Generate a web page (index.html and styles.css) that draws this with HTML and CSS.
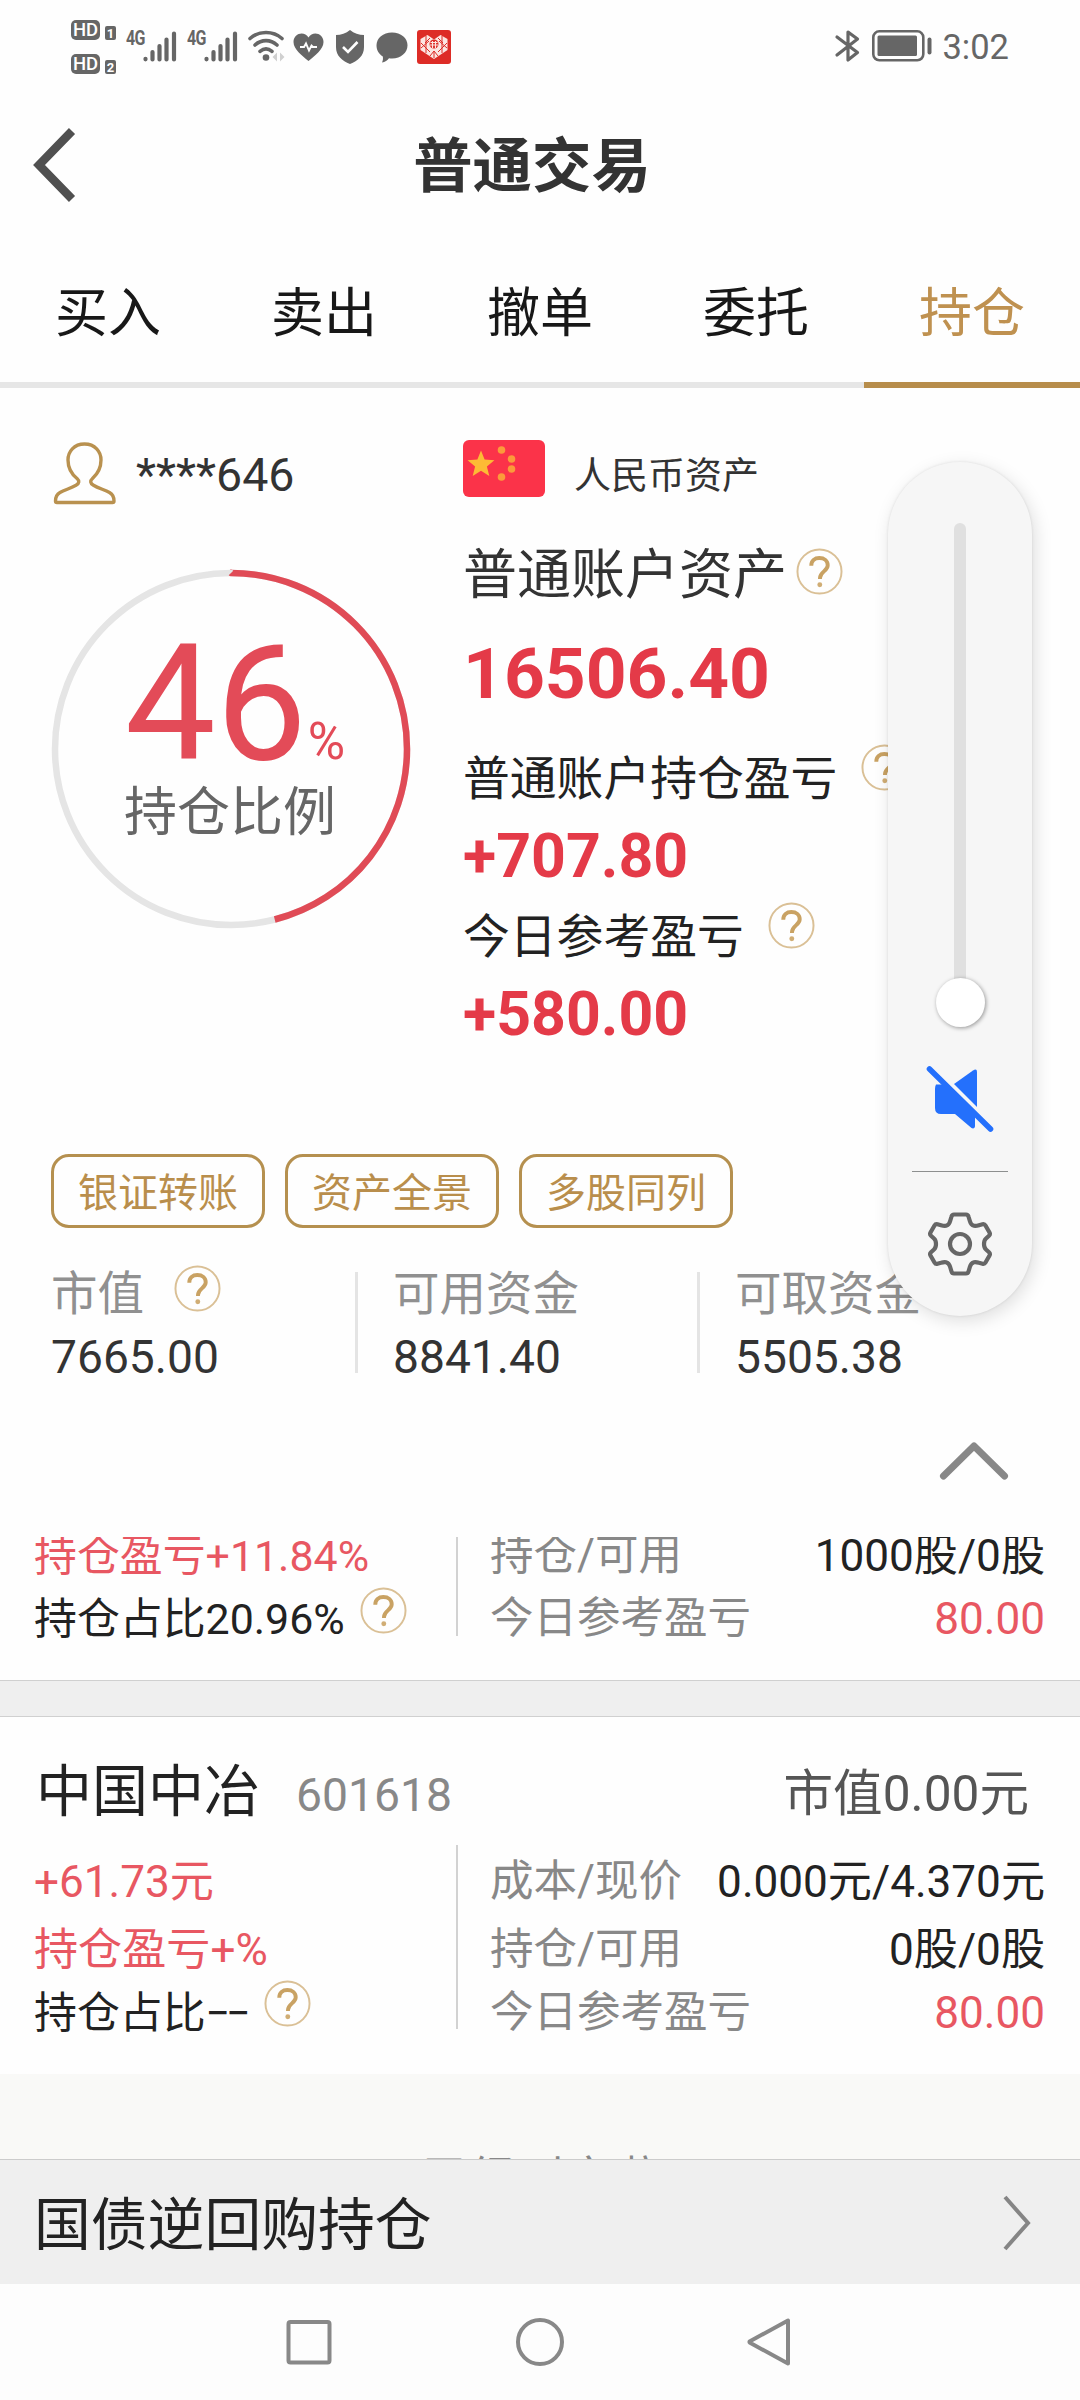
FILE: index.html
```html
<!DOCTYPE html>
<html lang="zh-CN">
<head>
    <meta charset="UTF-8">
    <meta name="viewport" content="width=device-width, initial-scale=1.0">
    <title>普通交易</title>
    <link rel="stylesheet" href="styles.css">
</head>
<body>
    <svg class="defs">
        <symbol id="help" viewBox="0 0 48 48">
            <circle cx="24" cy="24" r="22.500" fill="none" stroke="#dac096" stroke-width="2"/>
            <path d="M15.600 18c0-5 3.600-7.800 8.200-7.800 5 0 8.600 2.900 8.600 7.400 0 6-7.900 6.600-7.900 13v1" fill="none" stroke="#c9a263" stroke-width="4"/>
            <circle cx="24.300" cy="37.500" r="2.500" fill="#d0ad74"/>
        </symbol>
        <symbol id="signal" viewBox="0 0 34 31">
            <path d="M2.500 27.800v.5M9.500 21v7.500M16.500 15v13.500M23.500 8.500v20M31 2.500v26" stroke="#666" stroke-width="4.200" stroke-linecap="round"/>
        </symbol>
    </svg>

    <div class="status-bar">
        <div class="hd-group">
            <div class="hd-row"><span class="hd">HD</span><span class="sim">1</span></div>
            <div class="hd-row"><span class="hd">HD</span><span class="sim">2</span></div>
        </div>
        <span class="net">4G</span>
        <svg class="signal"><use href="#signal"/></svg>
        <span class="net net-second">4G</span>
        <svg class="signal"><use href="#signal"/></svg>
        <svg class="wifi" viewBox="0 0 38 31">
            <g fill="none" stroke="#666" stroke-width="3.600" stroke-linecap="round">
                <path d="M2 8.500c9-8 23-8 32 0M7 15c6.500-5.800 15.500-5.800 22 0M12 21.300c4-3.300 8-3.300 12 0"/>
            </g>
            <circle cx="18" cy="27.500" r="3.300" fill="#666"/>
            <path d="M29 22.500v9l-4.500-4.500zM32 22.500v9l4.500-4.500z" fill="#d0d0d0"/>
        </svg>
        <svg class="heart" viewBox="0 0 31 28">
            <path d="M15.500 28C9 22.500.5 16.500.5 9c0-9 11-11.500 15-4.500C19.500-2.500 30.500 0 30.500 9c0 7.500-8.500 13.500-15 19z" fill="#666"/>
            <path d="M7 14h4l2-3.500 3 7 2.500-5 1.500 1.500h4" fill="none" stroke="#fff" stroke-width="1.900"/>
        </svg>
        <svg class="shield" viewBox="0 0 30 34">
            <path d="M15 0c4 3.500 9 4.800 14 5v12c0 9-6 13.500-14 17C7 30.500 1 26 1 17V5c5-.2 10-1.500 14-5z" fill="#666"/>
            <path d="M8 17l5 5 9.500-10" fill="none" stroke="#fff" stroke-width="2.600"/>
        </svg>
        <svg class="bubble" viewBox="0 0 32 31">
            <path d="M16 .5c9 0 15.500 5.500 15.500 12.800S25 26.500 16 26.500c-1 0-2 0-3-.2-1.500 2.200-4 3.900-7 4.200 1-2 1.200-4 .8-6C2.700 22 .5 18 .5 13.300.5 6 7 .5 16 .5z" fill="#666"/>
        </svg>
        <svg class="app" viewBox="0 0 34 34">
            <rect width="34" height="34" rx="3" fill="#dd2c26"/>
            <path d="M17 9.500L10.500 5 3.500 9v11L17 29l13.500-9V9l-7-4z" fill="#fbe6e2"/>
            <path d="M4 13l9 9M4 18l8-7M9 6v17M13 8l-5 5M30 13l-9 9M30 18l-8-7M25 6v17M21 8l5 5M13 26l4-5 4 5M17 21v7" stroke="#dd2c26" stroke-width="1" fill="none"/>
            <circle cx="17" cy="14" r="4.500" fill="#dd2c26"/>
            <path d="M13.500 12.500h7M13 15h8M15.500 11v7M18.500 11v7" stroke="#fbe6e2" stroke-width="1.100"/>
        </svg>
        <svg class="bluetooth" viewBox="0 0 26 32">
            <path d="M2 7l20.500 15.500L13 30V2l9.500 7L2 25" fill="none" stroke="#666" stroke-width="3.200" stroke-linejoin="round" stroke-linecap="round"/>
        </svg>
        <svg class="battery" viewBox="0 0 61 32">
            <rect x="1.300" y="1.300" width="50" height="29" rx="6" fill="none" stroke="#666" stroke-width="2.600"/>
            <rect x="5.500" y="5.500" width="39.500" height="20.500" rx="1.500" fill="#666"/>
            <path d="M57.500 9.500v13" stroke="#666" stroke-width="4" stroke-linecap="round"/>
        </svg>
        <span class="clock">3:02</span>
    </div>

    <div class="header">
        <svg class="back" viewBox="0 0 44 74"><path d="M40 3L7 37l33 34" fill="none" stroke="#505050" stroke-width="8.500"/></svg>
        <h1>普通交易</h1>
    </div>

    <div class="tabs">
        <div class="tab">买入</div>
        <div class="tab">卖出</div>
        <div class="tab">撤单</div>
        <div class="tab">委托</div>
        <div class="tab active">持仓</div>
    </div>

    <div class="overview">
        <div class="account">
            <div class="user">
                <svg class="user-icon" viewBox="0 0 62 62">
                    <path d="M30.500 2C20 2 14 9.500 14 18c0 8 3.500 14 9 18.500 2.500 2.300 2.500 4.800-1 6.800-5 3-11 4.500-16 7.200-3.500 2-4.500 4-4.500 8.500 0 1.200.4 1.500 1.500 1.500h55.500c1.100 0 1.500-.3 1.500-1.500 0-4.500-1-6.500-4.500-8.500-5-2.700-11-4.200-16-7.200-3.500-2-3.500-4.500-1-6.800 5-4.500 8.500-10.500 8.500-18.500 0-8.500-6-16-16.500-16z" fill="none" stroke="#b9914f" stroke-width="3.400"/>
                </svg>
                <span>****646</span>
            </div>
            <div class="ring">
                <svg class="ring-svg" viewBox="0 0 360 360">
                    <circle cx="180" cy="180" r="176" fill="none" stroke="#e5e5e5" stroke-width="6.500"/>
                    <circle cx="180" cy="180" r="176" fill="none" stroke="#e04b56" stroke-width="6.500" pathLength="100" stroke-dasharray="46 54" transform="rotate(-90 180 180)"/>
                </svg>
                <div class="ring-value">46<small>%</small></div>
                <div class="ring-label">持仓比例</div>
            </div>
        </div>
        <div class="assets">
            <div class="currency">
                <svg class="flag" viewBox="0 0 82 57">
                    <rect width="82" height="57" rx="6" fill="#fb3349"/>
                    <path d="M18 10.500l3.600 9.100 9.800.6-7.500 6.300 2.400 9.500-8.300-5.300-8.300 5.300 2.400-9.500-7.500-6.300 9.800-.6z" fill="#fdbb35"/>
                    <g fill="#fb9a3a"><circle cx="38.500" cy="10" r="3.800"/><circle cx="48.500" cy="19" r="3.800"/><circle cx="48.500" cy="29" r="3.800"/><circle cx="38.500" cy="37" r="3.800"/></g>
                </svg>
                <span>人民币资产</span>
            </div>
            <div class="total-label">普通账户资产<svg class="help"><use href="#help"/></svg></div>
            <div class="total">16506.40</div>
            <div class="profit-label">普通账户持仓盈亏<svg class="help"><use href="#help"/></svg></div>
            <div class="profit">+707.80</div>
            <div class="profit-label today">今日参考盈亏<svg class="help"><use href="#help"/></svg></div>
            <div class="profit">+580.00</div>
        </div>
    </div>

    <div class="actions">
        <button class="action">银证转账</button>
        <button class="action">资产全景</button>
        <button class="action">多股同列</button>
    </div>

    <div class="stats">
        <div class="stat">
            <div class="stat-label">市值<svg class="help"><use href="#help"/></svg></div>
            <div class="stat-value">7665.00</div>
        </div>
        <div class="stat">
            <div class="stat-label">可用资金</div>
            <div class="stat-value">8841.40</div>
        </div>
        <div class="stat">
            <div class="stat-label">可取资金</div>
            <div class="stat-value">5505.38</div>
        </div>
    </div>

    <div class="collapse">
        <svg class="chevron-up" viewBox="0 0 68 40"><path d="M3.500 36L34 6l30.500 30" fill="none" stroke="#888" stroke-width="7" stroke-linecap="round" stroke-linejoin="round"/></svg>
    </div>

    <div class="holding holding-first">
        <div class="holding-body">
            <div class="holding-left">
                <div class="row red">持仓盈亏+11.84%</div>
                <div class="row">持仓占比20.96%<svg class="help"><use href="#help"/></svg></div>
            </div>
            <div class="holding-right">
                <div class="row"><span class="name">持仓/可用</span><span>1000股/0股</span></div>
                <div class="row"><span class="name">今日参考盈亏</span><span class="red">80.00</span></div>
            </div>
        </div>
    </div>

    <div class="holding">
        <div class="holding-title">
            <span class="stock">中国中冶</span>
            <span class="code">601618</span>
            <span class="value">市值0.00元</span>
        </div>
        <div class="holding-body">
            <div class="holding-left">
                <div class="row red">+61.73元</div>
                <div class="row red">持仓盈亏+%</div>
                <div class="row ratio">持仓占比<span class="dashes">−−</span><svg class="help"><use href="#help"/></svg></div>
            </div>
            <div class="holding-right">
                <div class="row"><span class="name">成本/现价</span><span>0.000元/4.370元</span></div>
                <div class="row"><span class="name">持仓/可用</span><span>0股/0股</span></div>
                <div class="row"><span class="name">今日参考盈亏</span><span class="red">80.00</span></div>
            </div>
        </div>
    </div>

    <div class="list-end"><p>已经到底啦</p></div>

    <div class="repo-bar">
        <span>国债逆回购持仓</span>
        <svg class="arrow-right" viewBox="0 0 30 56"><path d="M3 2l23 26L3 54" fill="none" stroke="#858585" stroke-width="4"/></svg>
    </div>

    <div class="nav-bar">
        <svg viewBox="0 0 50 50"><rect x="4.500" y="5" width="41" height="40.500" rx="2" fill="none" stroke="#888" stroke-width="4"/></svg>
        <svg viewBox="0 0 50 50"><circle cx="25" cy="25" r="22" fill="none" stroke="#888" stroke-width="4"/></svg>
        <svg viewBox="0 0 50 50"><path d="M42 3.500v43L4 25.800q-1.200-.8 0-1.600z" fill="none" stroke="#888" stroke-width="4" stroke-linejoin="round"/></svg>
    </div>

    <div class="volume">
        <div class="track"></div>
        <div class="thumb"></div>
        <svg class="mute" viewBox="0 0 68 68">
            <path d="M10 19.500h9l30 27.500v14c0 2-1.500 3-3.500 2L29 49H15q-6 0-6-6V24q0-3 1-4.500z" fill="#2470fc"/>
            <path d="M28 19L47 5.500q4-2.500 4 1.500V42z" fill="#2470fc"/>
            <path d="M3.500 4l61 60" stroke="#2470fc" stroke-width="5.600" stroke-linecap="round"/>
        </svg>
        <div class="volume-line"></div>
        <svg class="gear" viewBox="0 0 64 66">
            <path d="M26 3.500h12q2 0 2.500 2l1.500 5q1 3.500 4 4.300 2 .4 5-.6l3.500-1q2-.5 3 1.300l4 7q1 1.900-.5 3.300l-3 2.700q-2 1.800-2 5.500t2 5.500l3 2.700q1.500 1.400.5 3.300l-4 7q-1 1.800-3 1.300l-3.500-1q-3-1-5-.6-3 .8-4 4.300l-1.500 5q-.5 2-2.500 2H26q-2 0-2.500-2l-1.500-5q-1-3.500-4-4.300-2-.4-5 .6l-3.500 1q-2 .5-3-1.300l-4-7q-1-1.900.5-3.300l3-2.700q2-1.800 2-5.500T6 27.500l-3-2.700q-1.500-1.400-.5-3.300l4-7q1-1.800 3-1.300l3.500 1q3 1 5 .6 3-.8 4-4.300l1.500-5q.5-2 2.500-2z" fill="none" stroke="#666" stroke-width="4.200"/>
            <circle cx="32" cy="33" r="10" fill="none" stroke="#666" stroke-width="4.200"/>
        </svg>
    </div>
</body>
</html>
```
FILE: styles.css
```css
* {
    box-sizing: border-box;
}

body {
    margin: 0;
    width: 1080px;
    height: 2400px;
    position: relative;
    overflow: hidden;
    background-color: #fefefe;
    color: #222;
    font-family: Roboto, "Noto Sans CJK SC", sans-serif;
}

svg {
    display: block;
    flex: none;
    overflow: visible;
}

.defs {
    position: absolute;
    width: 0;
    height: 0;
}

.help {
    width: 47px;
    height: 47px;
}

.red {
    color: #e85762;
}

/* status bar */
.status-bar {
    display: flex;
    align-items: flex-start;
    height: 90px;
    padding: 0 71px;
    color: #666;
}

.hd-group {
    width: 55px;
    padding-top: 19px;
}

.hd-row {
    display: flex;
    align-items: flex-end;
    gap: 5px;
    height: 21px;
    margin-bottom: 13px;
}

.hd {
    width: 29px;
    height: 20px;
    border-radius: 5px;
    background-color: #666;
    color: #fff;
    font: 500 18.5px/21px Roboto, sans-serif;
    text-align: center;
}

.sim {
    width: 11px;
    height: 14px;
    border-radius: 2px;
    background-color: #666;
    color: #fff;
    font: bold 13px/15px Roboto, sans-serif;
    text-align: center;
}

.net {
    width: 17px;
    margin-top: 28px;
    font: bold 20px/20px Roboto, sans-serif;
    letter-spacing: -1px;
    white-space: nowrap;
    transform: scaleX(0.8);
    transform-origin: left;
}

.net-second {
    margin-left: 10px;
}

.signal {
    width: 34px;
    height: 31px;
    margin-top: 31px;
}

.wifi {
    width: 38px;
    height: 31px;
    margin: 30px 0 0 10px;
}

.heart {
    width: 31px;
    height: 28px;
    margin: 33px 0 0 7px;
}

.shield {
    width: 30px;
    height: 34px;
    margin: 30px 0 0 11px;
}

.bubble {
    width: 32px;
    height: 31px;
    margin: 32px 0 0 11px;
}

.app {
    width: 34px;
    height: 34px;
    margin: 30px 0 0 9px;
}

.bluetooth {
    width: 26px;
    height: 32px;
    margin: 30px -2px 0 auto;
}

.battery {
    width: 61px;
    height: 32px;
    margin: 30px 0 0 13px;
}

.clock {
    margin: 27px 0 0 9px;
    font-size: 34.5px;
    line-height: 40px;
}

/* header and tabs */
.header {
    display: flex;
    align-items: center;
    height: 150px;
    padding: 0 32px;
}

.back {
    width: 44px;
    height: 74px;
}

.header h1 {
    flex: 1;
    margin: 3px 60px 0 0;
    font-size: 59.4px;
    font-weight: bold;
    line-height: 64px;
    text-align: center;
    color: #333;
}

.tabs {
    display: flex;
    height: 148px;
}

.tab {
    flex: 1;
    padding-top: 43px;
    border-bottom: 6px solid #e6e6e6;
    font-size: 53px;
    line-height: 62px;
    text-align: center;
    color: #181818;
}

.tab.active {
    border-color: #b78d4b;
    color: #bf9150;
}

/* overview */
.overview {
    display: flex;
    height: 766px;
    padding: 52px 0 0 51px;
}

.account {
    width: 412px;
}

.user {
    display: flex;
    align-items: center;
    gap: 20px;
    height: 69px;
    margin-bottom: 60px;
    padding-left: 3px;
    color: #333;
    font-size: 46.5px;
}

.user-icon {
    width: 62px;
    height: 62px;
    margin-top: -3px;
}

.ring {
    display: flex;
    flex-direction: column;
    align-items: center;
    position: relative;
    width: 360px;
    height: 360px;
}

.ring-svg {
    position: absolute;
    inset: 0;
}

.ring-value {
    height: 150px;
    margin: 60px 0 0 8px;
    color: #e34b58;
    font-size: 162px;
    line-height: 150px;
    white-space: nowrap;
}

.ring-value small {
    margin-left: 1px;
    font-size: 51px;
}

.ring-label {
    margin: 2px 2px 0 0;
    color: #666;
    font-size: 53px;
    line-height: 64px;
}

.currency {
    display: flex;
    align-items: center;
    gap: 29px;
    height: 57px;
    color: #333;
    font-size: 37px;
}

.currency span {
    margin-top: 9px;
}

.flag {
    width: 82px;
    height: 57px;
}

.total-label {
    display: flex;
    gap: 9px;
    height: 60px;
    margin-top: 49px;
    color: #333;
    font-size: 54px;
    line-height: 60px;
}

.total-label .help {
    margin-top: 2px;
}

.total {
    margin-top: 32px;
    color: #e43a48;
    font-size: 71.3px;
    font-weight: bold;
    line-height: 72px;
}

.profit-label {
    display: flex;
    gap: 24px;
    height: 50px;
    margin-top: 44px;
    font-size: 46.8px;
    line-height: 50px;
}

.profit-label .help {
    margin-top: -10px;
}

.profit-label.today {
    margin-top: 25px;
}

.profit {
    margin-top: 23px;
    color: #e43a48;
    font-size: 60.8px;
    font-weight: bold;
    line-height: 60px;
}

.actions {
    display: flex;
    gap: 20px;
    padding-left: 51px;
}

.action {
    width: 214px;
    height: 74px;
    padding: 6px 0 0;
    border: 3px solid #b5904f;
    border-radius: 18px;
    background-color: transparent;
    color: #b98e4c;
    font-family: inherit;
    font-size: 40px;
    line-height: 62px;
}

.stats {
    display: flex;
    margin-top: 44px;
    padding-left: 16px;
}

.stat {
    width: 342px;
    height: 101px;
    padding-left: 35px;
    border-right: 3px solid #e4e4e4;
}

.stat:last-child {
    border-right: none;
}

.stat-label {
    display: flex;
    gap: 30px;
    height: 50px;
    margin-top: -3px;
    color: #909090;
    font-size: 46.5px;
    line-height: 50px;
}

.stat-label .help {
    margin-top: -4px;
}

.stat-value {
    margin-top: 13px;
    color: #333;
    font-size: 46.2px;
    line-height: 50px;
}

.collapse {
    display: flex;
    justify-content: flex-end;
    height: 164px;
    padding: 67px 72px 0 0;
}

.chevron-up {
    width: 68px;
    height: 40px;
}

/* holdings */
.holding {
    height: 358px;
    padding-top: 43px;
}

.holding-first {
    height: 179px;
    padding-top: 0;
    overflow: hidden;
    border-bottom: 35px solid #efefef;
    box-shadow: inset 0 -1px #d0d0d0, 0 1px #d0d0d0;
}

.holding-title {
    display: flex;
    align-items: baseline;
    height: 86px;
    padding: 0 51px 0 36px;
    line-height: 66px;
}

.stock {
    width: 260px;
    font-size: 56px;
}

.code {
    color: #888;
    font-size: 46.3px;
}

.value {
    margin-left: auto;
    color: #555;
    font-size: 49.6px;
}

.holding-body {
    display: flex;
    height: 184px;
    padding-right: 35px;
}

.holding-first .holding-body {
    height: 99px;
}

.holding-left {
    width: 458px;
    padding-left: 34px;
    border-right: 2px solid #d2d2d2;
}

.holding-right {
    flex: 1;
    padding-left: 32px;
}

.row {
    display: flex;
    justify-content: space-between;
    height: 68px;
    margin-top: 3px;
    font-size: 44.1px;
    line-height: 68px;
}

.row + .row {
    margin-top: 0;
}

.row + .row + .row {
    height: 58px;
    line-height: 58px;
}

.holding-left .row {
    justify-content: flex-start;
}

.holding-first .row {
    height: 64px;
    margin-top: -13px;
    line-height: 64px;
}

.holding-first .holding-left .row,
.holding-left .ratio {
    font-size: 42.9px;
}

.holding-first .row + .row {
    margin-top: -1px;
}

.row .help {
    margin-left: 15px;
}

.ratio .help {
    margin-top: -4px;
    margin-left: 17px;
}

.dashes {
    letter-spacing: -4px;
}

.name {
    color: #888;
    font-size: 43.5px;
}

.list-end {
    height: 85px;
    padding-top: 72px;
    overflow: hidden;
    background-color: #f9f9f7;
}

.list-end p {
    margin: 0;
    color: #888;
    font-size: 47px;
    line-height: 66px;
    text-align: center;
}

.repo-bar {
    display: flex;
    align-items: center;
    justify-content: space-between;
    height: 125px;
    padding: 0 48px 0 34px;
    border-top: 1px solid #ccc;
    background-color: #efefef;
    font-size: 56.8px;
}

.repo-bar span {
    margin-top: 8px;
    line-height: 64px;
}

.arrow-right {
    width: 30px;
    height: 56px;
    margin-top: 2px;
}

.nav-bar {
    display: flex;
    justify-content: center;
    gap: 181px;
    height: 116px;
    padding-top: 33px;
    background-color: #fdfdfd;
}

.nav-bar svg {
    width: 50px;
    height: 50px;
}

/* system volume panel over the page */
.volume {
    position: absolute;
    top: 462px;
    left: 888px;
    display: flex;
    flex-direction: column;
    align-items: center;
    width: 144px;
    height: 854px;
    padding-top: 61px;
    border-radius: 72px;
    background-color: #f6f6f6;
    box-shadow: 3px 5px 18px rgba(0, 0, 0, 0.13), 0 0 3px rgba(0, 0, 0, 0.1);
}

.track {
    width: 12px;
    height: 457px;
    border-radius: 6px 6px 0 0;
    background-color: #e0e0e0;
}

.thumb {
    width: 49px;
    height: 49px;
    margin-top: -2px;
    border-radius: 50%;
    background-color: #fff;
    box-shadow: 1px 1px 4px rgba(0, 0, 0, 0.4);
}

.mute {
    width: 68px;
    height: 68px;
    margin-top: 38px;
}

.volume-line {
    width: 96px;
    height: 1px;
    margin-top: 38px;
    background-color: #8d8f8f;
}

.gear {
    width: 64px;
    height: 66px;
    margin-top: 39px;
}
```
